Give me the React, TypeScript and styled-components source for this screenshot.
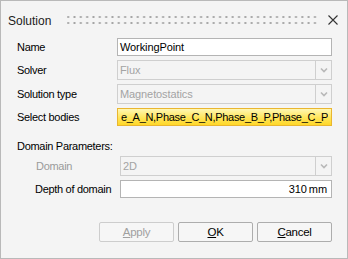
import React from 'react';
import styled, { createGlobalStyle } from 'styled-components';

const GlobalStyle = createGlobalStyle`
  html, body {
    margin: 0;
    padding: 0;
    background: #f4f4f4;
  }
  * {
    box-sizing: border-box;
  }
`;

const Window = styled.div`
  width: 348px;
  height: 259px;
  border: 1px solid #b9b9b9;
  background: #f4f4f4;
  font-family: "Liberation Sans", Arial, sans-serif;
  font-size: 11px;
  letter-spacing: -0.3px;
  color: #000;
  display: flex;
  flex-direction: column;
`;

const TitleBar = styled.div`
  height: 37px;
  display: flex;
  align-items: center;
  padding: 0 9px 0 7px;
`;

const Title = styled.div`
  font-size: 12px;
  letter-spacing: 0;
  color: #1c1c1c;
  width: 59px;
  padding-top: 2px;
`;

const Grip = styled.div`
  flex: 1;
  height: 12px;
  margin-right: 8px;
  background-image: radial-gradient(circle, #a4a4a4 0.9px, transparent 1.2px);
  background-size: 6.33px 6px;
  background-position: -2px 0;
`;

const CloseButton = styled.div`
  width: 10px;
  height: 10px;
  display: flex;
  margin-top: 1px;
`;

const Form = styled.div`
  padding: 0 15px 0 16px;
  display: flex;
  flex-direction: column;
  gap: 4px;
`;

const Row = styled.div<{ $indent?: number; $h: number }>`
  display: grid;
  grid-template-columns: ${p => 100 - (p.$indent ?? 0) + (p.$indent ? 3 : 0)}px 1fr;
  padding-left: ${p => p.$indent ?? 0}px;
  height: ${p => p.$h}px;
  align-items: center;
`;

const Label = styled.div<{ $disabled?: boolean }>`
  color: ${p => (p.$disabled ? '#9a9a9a' : '#000')};
  white-space: nowrap;
`;

const Field = styled.div<{ $variant?: 'edit' | 'disabled' | 'picked' }>`
  height: 100%;
  display: flex;
  align-items: center;
  overflow: hidden;
  white-space: nowrap;
  letter-spacing: -0.1px;
  padding: 0 3px 0 2px;
  border: 1px solid
    ${p =>
      p.$variant === 'picked' ? '#e9b630' : p.$variant === 'disabled' ? '#cfcfcf' : '#b4b4b4'};
  color: ${p => (p.$variant === 'disabled' ? '#a3a3a3' : '#000')};
  background: ${p =>
    p.$variant === 'picked'
      ? 'linear-gradient(#fff7b4, #ffe55a 55%, #ffd728)'
      : p.$variant === 'disabled'
        ? '#f4f4f4'
        : '#fff'};
`;

const PickedText = styled.div`
  flex: 1;
  text-align: right;
  letter-spacing: -0.3px;
  overflow: hidden;
`;

const Combo = styled.div`
  height: 100%;
  display: flex;
  border: 1px solid #cfcfcf;
  color: #a3a3a3;
  letter-spacing: -0.1px;
`;

const ComboText = styled.div`
  flex: 1;
  display: flex;
  align-items: center;
  padding-left: 2px;
`;

const ComboArrow = styled.div`
  width: 16px;
  border-left: 1px solid #cfcfcf;
  display: flex;
  align-items: center;
  justify-content: center;
`;

const NumberField = styled(Field)`
  justify-content: flex-end;
  padding-right: 4px;
`;

const Unit = styled.span`
  margin-left: 2px;
`;

const Section = styled.div`
  height: 14px;
  margin-top: 9px;
  display: flex;
  align-items: center;
  margin-bottom: -1px;
`;

const Buttons = styled.div`
  display: flex;
  justify-content: flex-end;
  gap: 4px;
  margin-top: 24px;
  padding-right: 15px;
`;

const Button = styled.div<{ $disabled?: boolean }>`
  width: 75px;
  height: 20px;
  border: 1px solid ${p => (p.$disabled ? '#cdcdcd' : '#adadad')};
  border-radius: 2px;
  background: #f6f6f6;
  display: flex;
  align-items: center;
  justify-content: center;
  font-size: 11.5px;
  color: ${p => (p.$disabled ? '#a0a0a0' : '#000')};
  u {
    text-underline-offset: 1px;
  }
`;

const Chevron = () => (
  <svg width="8" height="6" viewBox="0 0 8 6">
    <path d="M1 1.5 L4 4.5 L7 1.5" fill="none" stroke="#b8b8b8" strokeWidth="1.6" />
  </svg>
);

const App = () => (
  <>
    <GlobalStyle />
    <Window>
      <TitleBar>
        <Title>Solution</Title>
        <Grip />
        <CloseButton>
          <svg width="10" height="10" viewBox="0 0 10 10">
            <path d="M0.5 0.5 L9.5 9.5 M9.5 0.5 L0.5 9.5" stroke="#333" strokeWidth="1.1" />
          </svg>
        </CloseButton>
      </TitleBar>
      <Form>
        <Row $h={18}>
          <Label>Name</Label>
          <Field $variant="edit">WorkingPoint</Field>
        </Row>
        <Row $h={20}>
          <Label>Solver</Label>
          <Combo>
            <ComboText>Flux</ComboText>
            <ComboArrow>
              <Chevron />
            </ComboArrow>
          </Combo>
        </Row>
        <Row $h={20}>
          <Label>Solution type</Label>
          <Combo>
            <ComboText>Magnetostatics</ComboText>
            <ComboArrow>
              <Chevron />
            </ComboArrow>
          </Combo>
        </Row>
        <Row $h={18}>
          <Label>Select bodies</Label>
          <Field $variant="picked">
            <PickedText>e_A_N,Phase_C_N,Phase_B_P,Phase_C_P</PickedText>
          </Field>
        </Row>
        <Section>Domain Parameters:</Section>
        <Row $h={20} $indent={19}>
          <Label $disabled>Domain</Label>
          <Combo>
            <ComboText>2D</ComboText>
            <ComboArrow>
              <Chevron />
            </ComboArrow>
          </Combo>
        </Row>
        <Row $h={18} $indent={18}>
          <Label>Depth of domain</Label>
          <NumberField $variant="edit">
            310<Unit>mm</Unit>
          </NumberField>
        </Row>
      </Form>
      <Buttons>
        <Button $disabled>
          <span>
            <u>A</u>pply
          </span>
        </Button>
        <Button>
          <span>
            <u>O</u>K
          </span>
        </Button>
        <Button>
          <span>
            <u>C</u>ancel
          </span>
        </Button>
      </Buttons>
    </Window>
  </>
);

export default App;
